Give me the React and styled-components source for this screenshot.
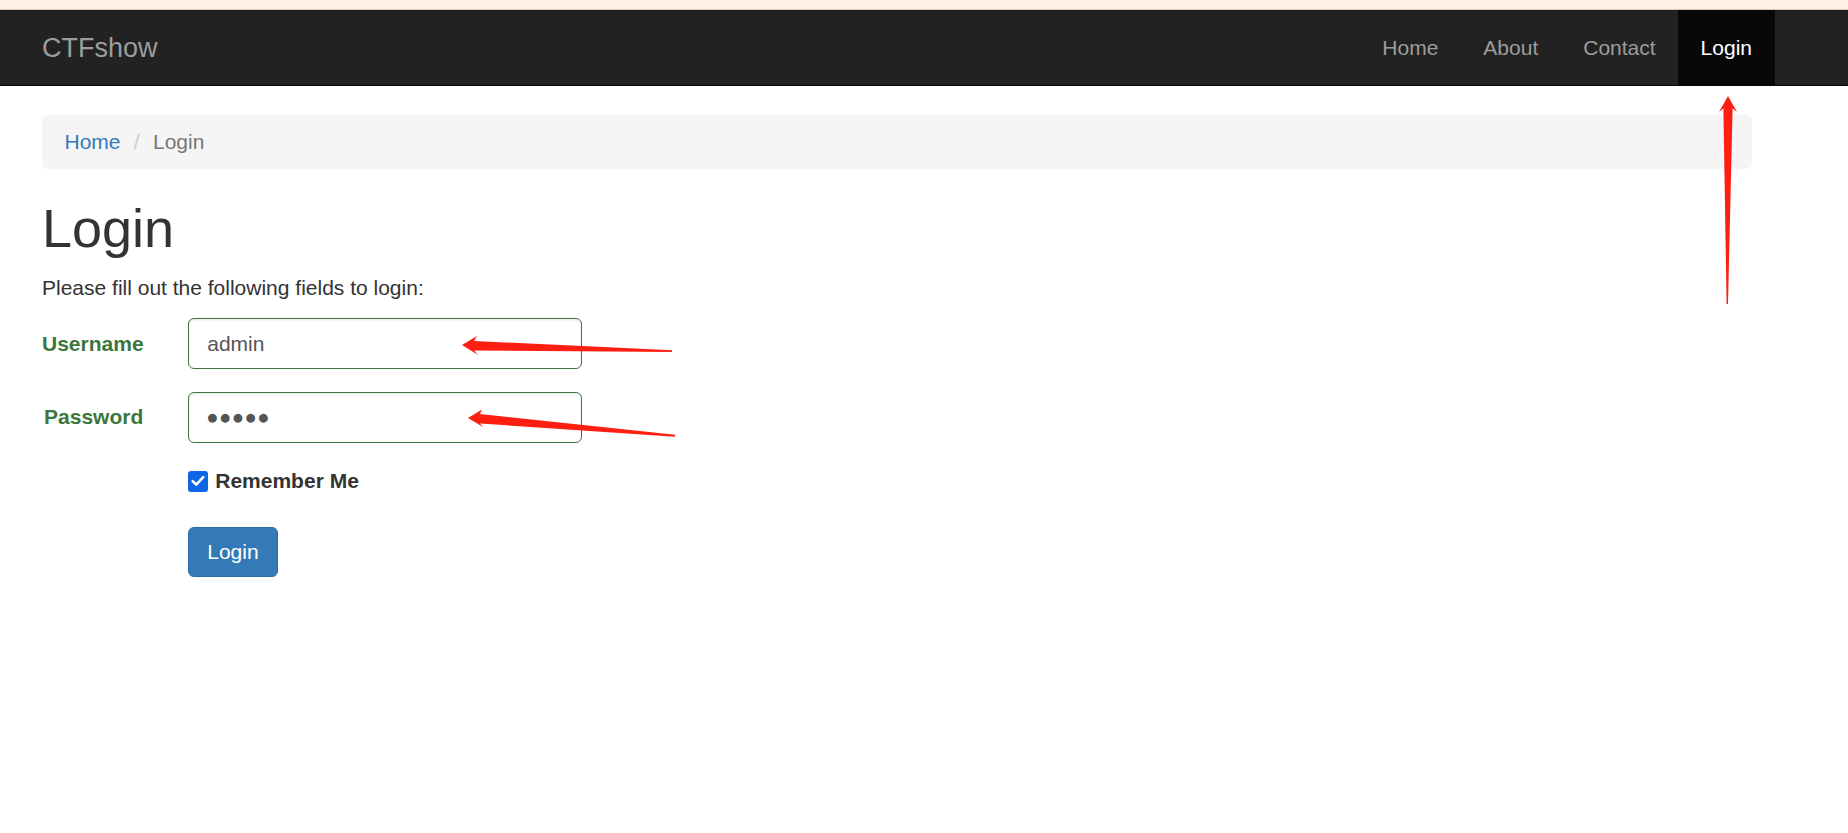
import React from "react";
import styled, { createGlobalStyle } from "styled-components";

const Global = createGlobalStyle`
  * { box-sizing: border-box; }
  html, body { margin: 0; padding: 0; background: #fff; }
  body {
    font-family: "Liberation Sans", Arial, Helvetica, sans-serif;
    font-size: 21px;
    line-height: 30px;
    color: #333;
  }
`;

const Page = styled.div`
  position: relative;
  width: 1848px;
  min-height: 833px;
  overflow: hidden;
`;

const TopStrip = styled.div`
  height: 10px;
  background: #fdf1e6;
  border-bottom: 1px solid #e6c6b4;
`;

const Navbar = styled.nav`
  height: 76px;
  background: #222;
  border-bottom: 1px solid #080808;
`;

const Container = styled.div`
  margin-left: 42px;
  width: 1710px;
`;

const NavInner = styled(Container)`
  display: flex;
  justify-content: space-between;
  align-items: stretch;
  height: 75px;
`;

const Brand = styled.a`
  font-size: 27px;
  line-height: 30px;
  padding: 22.5px 0;
  color: #9d9d9d;
  text-decoration: none;
`;

const NavList = styled.ul`
  display: flex;
  list-style: none;
  margin: 0 -22.5px 0 0;
  padding: 0;
`;

const NavLink = styled.a`
  display: block;
  padding: 22.5px;
  font-size: 21px;
  line-height: 30px;
  text-decoration: none;
  color: ${(p) => (p.$active ? "#fff" : "#9d9d9d")};
  background: ${(p) => (p.$active ? "#080808" : "transparent")};
`;

const Breadcrumb = styled.ol`
  display: flex;
  list-style: none;
  margin: 29px 0 30px;
  padding: 12px 22.5px;
  background: #f5f5f5;
  border-radius: 6px;
`;

const Crumb = styled.li`
  color: ${(p) => (p.$active ? "#777" : "#337ab7")};
`;

const Sep = styled.li`
  padding: 0 7.5px 0 13.3px;
  color: #ccc;
  white-space: pre;
`;

const CrumbLink = styled.a`
  color: #337ab7;
  text-decoration: none;
`;

const Title = styled.h1`
  font-size: 54px;
  line-height: 1.1;
  font-weight: 500;
  margin: 30px 0 15px;
  color: #333;
`;

const Lead = styled.p`
  margin: 0 0 15px;
`;

const Form = styled.form`
  margin: 0 -22.5px;
`;

const Group = styled.div`
  display: flex;
  margin-bottom: 22.5px;
`;

const LabelCol = styled.label`
  width: 146.25px;
  padding: 10.5px 22.5px 0;
  text-align: right;
  font-weight: 700;
  color: #3c763d;
`;

const Col = styled.div`
  width: 438.75px;
  padding: 0 22.5px;
  margin-left: ${(p) => (p.$offset ? "146.25px" : "0")};
`;

const Input = styled.input`
  display: block;
  width: 100%;
  height: 51px;
  padding: 9px 18px;
  font-family: ${(p) => (p.$dots ? '"DejaVu Sans", sans-serif' : "inherit")};
  font-size: ${(p) => (p.$dots ? "11.5px" : "21px")};
  letter-spacing: ${(p) => (p.$dots ? "2.7px" : "normal")};
  line-height: 30px;
  color: #555;
  background: #fff;
  border: 1px solid #3c763d;
  border-radius: 6px;
  box-shadow: inset 0 1.5px 1.5px rgba(0, 0, 0, 0.075);
  outline: none;
`;

const CheckLabel = styled.label`
  display: inline-flex;
  align-items: center;
  gap: 7px;
  font-weight: 700;
  color: #333;
  line-height: 30px;
  margin-bottom: 8px;
`;

const CheckBox = styled.span`
  width: 20px;
  height: 21px;
  border-radius: 3px;
  background: #0d66e4;
  display: inline-flex;
  align-items: center;
  justify-content: center;
`;

const Button = styled.button`
  font-family: inherit;
  font-size: 21px;
  line-height: 30px;
  padding: 9px 18px;
  color: #fff;
  background: #337ab7;
  border: 1px solid #2e6da4;
  border-radius: 6px;
  cursor: pointer;
`;

const Overlay = styled.svg`
  position: absolute;
  left: 0;
  top: 0;
  width: 1848px;
  height: 833px;
  pointer-events: none;
`;

export default function App() {
  return (
    <Page>
      <Global />
      <TopStrip />
      <Navbar>
        <NavInner>
          <Brand href="#">CTFshow</Brand>
          <NavList>
            <li><NavLink href="#">Home</NavLink></li>
            <li><NavLink href="#">About</NavLink></li>
            <li><NavLink href="#">Contact</NavLink></li>
            <li><NavLink href="#" $active>Login</NavLink></li>
          </NavList>
        </NavInner>
      </Navbar>
      <Container>
        <Breadcrumb>
          <Crumb><CrumbLink href="#">Home</CrumbLink></Crumb>
          <Sep aria-hidden="true">{"/\u00a0"}</Sep>
          <Crumb $active>Login</Crumb>
        </Breadcrumb>
        <Title>Login</Title>
        <Lead>Please fill out the following fields to login:</Lead>
        <Form onSubmit={(e) => e.preventDefault()}>
          <Group>
            <LabelCol htmlFor="username">Username</LabelCol>
            <Col>
              <Input id="username" type="text" defaultValue="admin" />
            </Col>
          </Group>
          <Group>
            <LabelCol htmlFor="password">Password</LabelCol>
            <Col>
              <Input id="password" type="text" $dots readOnly value={"\u25CF\u25CF\u25CF\u25CF\u25CF"} />
            </Col>
          </Group>
          <Group>
            <Col $offset>
              <CheckLabel>
                <CheckBox>
                  <svg width="14" height="12" viewBox="0 0 14 12">
                    <path d="M1.8 6.2 L5.3 9.6 L12.2 2.2" fill="none" stroke="#fff" strokeWidth="2.6" strokeLinecap="round" strokeLinejoin="round" />
                  </svg>
                </CheckBox>
                Remember Me
              </CheckLabel>
            </Col>
          </Group>
          <Group>
            <Col $offset>
              <Button type="submit">Login</Button>
            </Col>
          </Group>
        </Form>
      </Container>
      <Overlay viewBox="0 0 1848 833">
        <polygon fill="#ff1e12" points="1728,96 1737,112 1732.6,108.5 1728,304 1726.6,304 1723.4,108.5 1719,112" />
        <polygon fill="#ff1e12" points="462,345 477,336 474,341 672,350.3 672,352 474,350.5 478,355" />
        <polygon fill="#ff1e12" points="468,418 482,409.5 480,414 675,434.8 675,436.8 480,423.5 483,427" />
      </Overlay>
    </Page>
  );
}
